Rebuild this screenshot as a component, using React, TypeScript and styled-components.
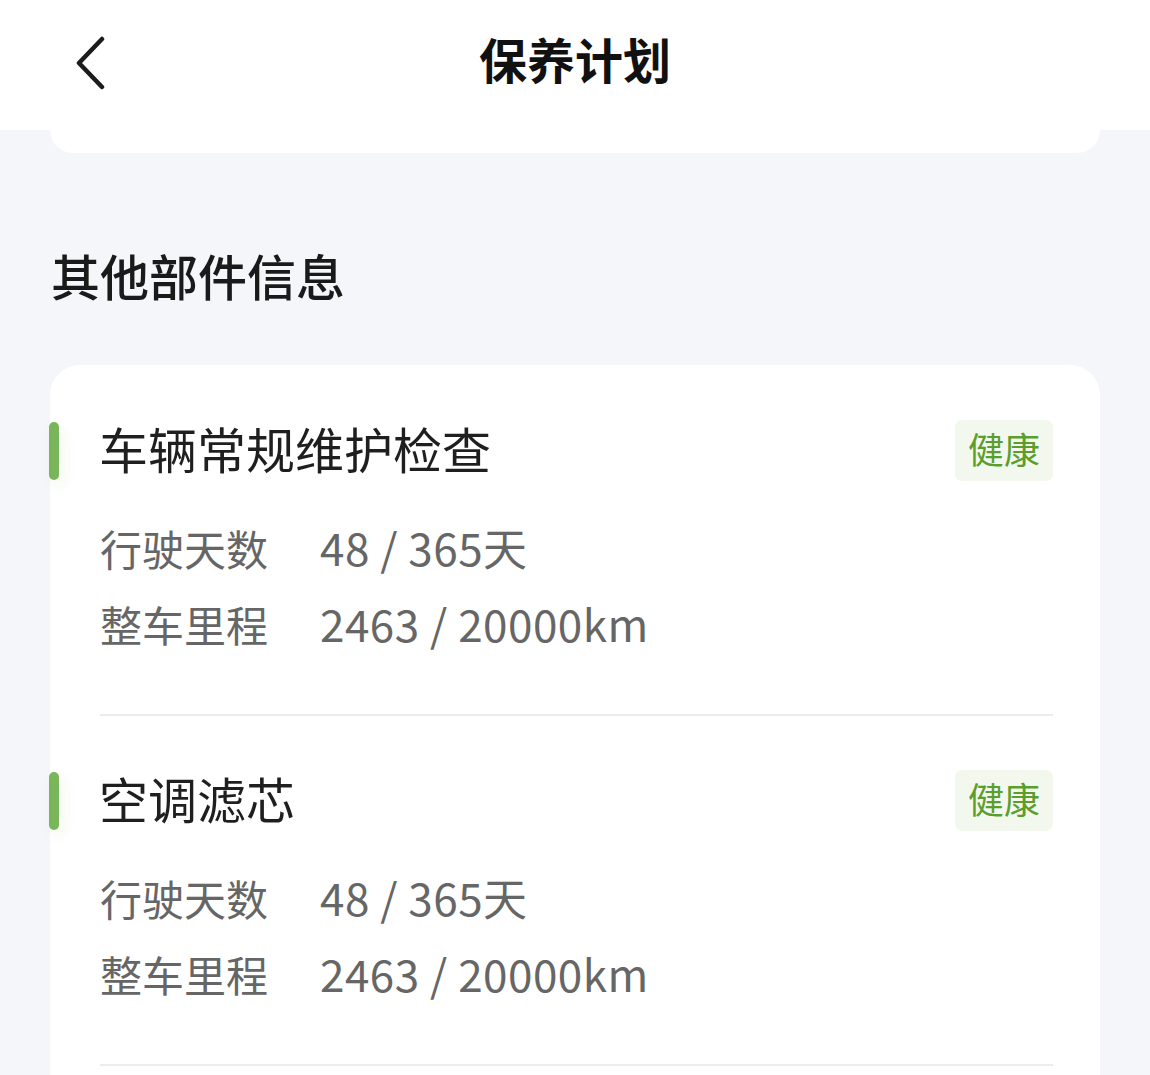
import type { FC } from "react";
import styled, { createGlobalStyle } from "styled-components";

type Part = {
  id: string;
  name: string;
  status: string;
  days: string;
  mileage: string;
};

const parts: Part[] = [
  {
    id: "routine",
    name: "车辆常规维护检查",
    status: "健康",
    days: "48 / 365天",
    mileage: "2463 / 20000km",
  },
  {
    id: "ac-filter",
    name: "空调滤芯",
    status: "健康",
    days: "48 / 365天",
    mileage: "2463 / 20000km",
  },
];

const GlobalStyle = createGlobalStyle`
  html, body {
    margin: 0;
    padding: 0;
    background: #f5f6fa;
    font-family: "Noto Sans CJK SC", "Noto Sans", sans-serif;
  }
  * {
    box-sizing: border-box;
  }
`;

const Page = styled.div`
  width: 1150px;
  height: 1075px;
  overflow: hidden;
  background: #f5f6fa;
`;

const TopBar = styled.header`
  position: relative;
  height: 130px;
  background: #fff;
  display: flex;
  align-items: center;
  justify-content: center;
`;

const BackButton = styled.button`
  position: absolute;
  left: 62px;
  top: 30px;
  width: 56px;
  height: 66px;
  padding: 0;
  border: none;
  background: transparent;
  display: flex;
  align-items: center;
  justify-content: center;
`;

const PageTitle = styled.h1`
  margin: 0 0 14px;
  font-size: 48px;
  line-height: 60px;
  font-weight: 700;
  color: #111;
`;

const CardStub = styled.div`
  height: 23px;
  margin: 0 50px;
  background: #fff;
  border-radius: 0 0 26px 26px;
`;

const SectionTitle = styled.h2`
  margin: 96px 0 0 51px;
  font-size: 49px;
  line-height: 52px;
  font-weight: 500;
  color: #1a1a1a;
`;

const Card = styled.section`
  margin: 64px 50px 0;
  padding: 1px 0 120px;
  background: #fff;
  border-radius: 30px 30px 0 0;
`;

const Item = styled.article`
  padding: 54px 47px 0 0;
`;

const ItemHead = styled.div`
  display: flex;
  align-items: center;
  height: 61px;
`;

const Accent = styled.span`
  width: 10px;
  height: 58px;
  margin-left: -1px;
  border-radius: 5px;
  background: #78b659;
  box-shadow: 4px 6px 14px rgba(120, 182, 89, 0.12);
`;

const ItemName = styled.h3`
  flex: 1;
  margin: 0 0 6px 40px;
  font-size: 49px;
  line-height: 61px;
  font-weight: 400;
  color: #1f1f1f;
`;

const Badge = styled.span`
  width: 98px;
  height: 61px;
  padding-bottom: 6px;
  border-radius: 7px;
  background: #f3f8ef;
  color: #5c9e2e;
  font-size: 36px;
  display: flex;
  align-items: center;
  justify-content: center;
`;

const Rows = styled.dl`
  margin: 31px 0 0 50px;
  padding-bottom: 50px;
  border-bottom: 2px solid #ececec;
`;

const Row = styled.div`
  display: flex;
  align-items: center;
  height: 76px;
  padding-bottom: 6px;
  color: #666;
`;

const Label = styled.dt`
  width: 220px;
  font-size: 42px;
`;

const Value = styled.dd`
  margin: 0;
  font-size: 44px;
  letter-spacing: 0.5px;
`;

const ChevronLeft: FC = () => (
  <svg width="34" height="54" viewBox="0 0 34 54" fill="none">
    <path
      d="M29 3 L6 27 L29 51"
      stroke="#1c1c1c"
      strokeWidth="4.5"
      strokeLinecap="round"
      strokeLinejoin="round"
    />
  </svg>
);

const App: FC = () => (
  <Page>
    <GlobalStyle />
    <TopBar>
      <BackButton aria-label="返回">
        <ChevronLeft />
      </BackButton>
      <PageTitle>保养计划</PageTitle>
    </TopBar>
    <CardStub />
    <SectionTitle>其他部件信息</SectionTitle>
    <Card>
      {parts.map((part) => (
        <Item key={part.id}>
          <ItemHead>
            <Accent />
            <ItemName>{part.name}</ItemName>
            <Badge>{part.status}</Badge>
          </ItemHead>
          <Rows>
            <Row>
              <Label>行驶天数</Label>
              <Value>{part.days}</Value>
            </Row>
            <Row>
              <Label>整车里程</Label>
              <Value>{part.mileage}</Value>
            </Row>
          </Rows>
        </Item>
      ))}
    </Card>
  </Page>
);

export default App;
